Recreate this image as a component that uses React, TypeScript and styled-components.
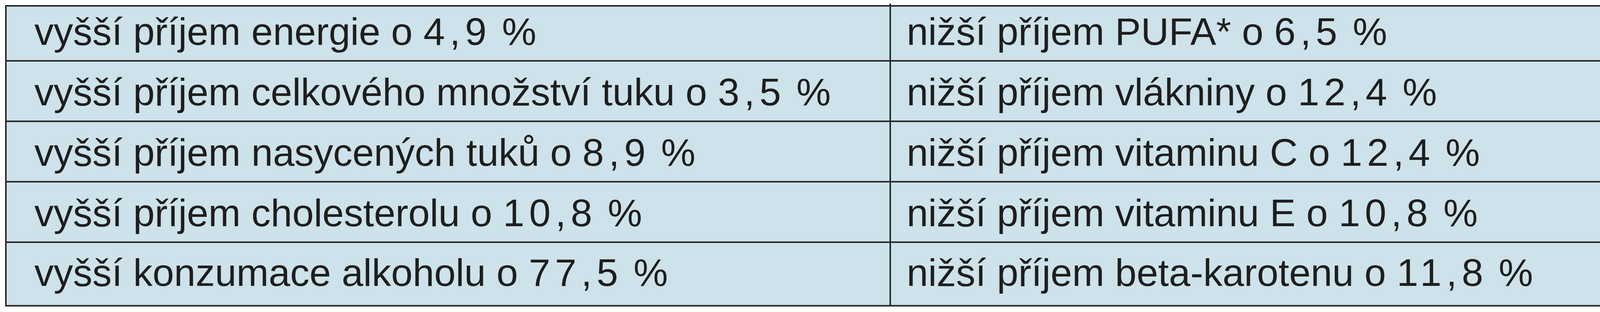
import React from 'react';
import styled, { createGlobalStyle } from 'styled-components';

const rows = [
  { left: 'vyšší příjem energie o 4,9 %', right: 'nižší příjem PUFA* o 6,5 %', height: 137, top: 14 },
  { left: 'vyšší příjem celkového množství tuku o 3,5 %', right: 'nižší příjem vlákniny o 12,4 %', height: 151, top: 28 },
  { left: 'vyšší příjem nasycených tuků o 8,9 %', right: 'nižší příjem vitaminu C o 12,4 %', height: 151, top: 28 },
  { left: 'vyšší příjem cholesterolu o 10,8 %', right: 'nižší příjem vitaminu E o 10,8 %', height: 151, top: 28 },
  { left: 'vyšší konzumace alkoholu o 77,5 %', right: 'nižší příjem beta-karotenu o 11,8 %', height: 159, top: 26 },
];

const GlobalStyle = createGlobalStyle`
  html, body {
    margin: 0;
    padding: 0;
    background: #ffffff;
  }
`;

const Page = styled.div`
  padding: 13px 0 0 13px;
`;

const Table = styled.div`
  display: grid;
  grid-template-columns: 2264px 1fr;
  box-sizing: border-box;
  width: 4100px;
  border: 4px solid #2a2a2a;
  background-color: #cde2ea;
  font-family: 'Liberation Sans', Arial, sans-serif;
  font-size: 99px;
  line-height: 1;
  color: #1e1e1e;
`;

interface CellProps {
  $height: number;
  $top: number;
  $first: boolean;
}

const Cell = styled.div<CellProps>`
  position: relative;
  min-width: 0;
  height: ${(p) => p.$height - p.$top}px;
  padding-top: ${(p) => p.$top}px;
  border-top: ${(p) => (p.$first ? 'none' : '4px solid #2a2a2a')};
  white-space: nowrap;
`;

const LeftCell = styled(Cell)`
  padding-left: 71px;
  border-right: 4px solid #2a2a2a;

  /* the column rule pokes a little above the frame */
  &::before {
    content: '';
    display: ${(p) => (p.$first ? 'block' : 'none')};
    position: absolute;
    top: -8px;
    right: -4px;
    width: 4px;
    height: 4px;
    background: #2a2a2a;
  }
`;

const RightCell = styled(Cell)`
  padding-left: 40px;
`;

const Num = styled.span`
  letter-spacing: 12px;
`;

const withNumbers = (text: string) =>
  text.split(/(\d+,\d+)/).map((part, i) =>
    /^\d+,\d+$/.test(part) ? <Num key={i}>{part}</Num> : part
  );

const App = () => {
  return (
    <Page>
      <GlobalStyle />
      <Table>
        {rows.map((r, i) => (
          <React.Fragment key={i}>
            <LeftCell $height={r.height} $top={r.top} $first={i === 0}>{withNumbers(r.left)}</LeftCell>
            <RightCell $height={r.height} $top={r.top} $first={i === 0}>{withNumbers(r.right)}</RightCell>
          </React.Fragment>
        ))}
      </Table>
    </Page>
  );
};

export default App;
